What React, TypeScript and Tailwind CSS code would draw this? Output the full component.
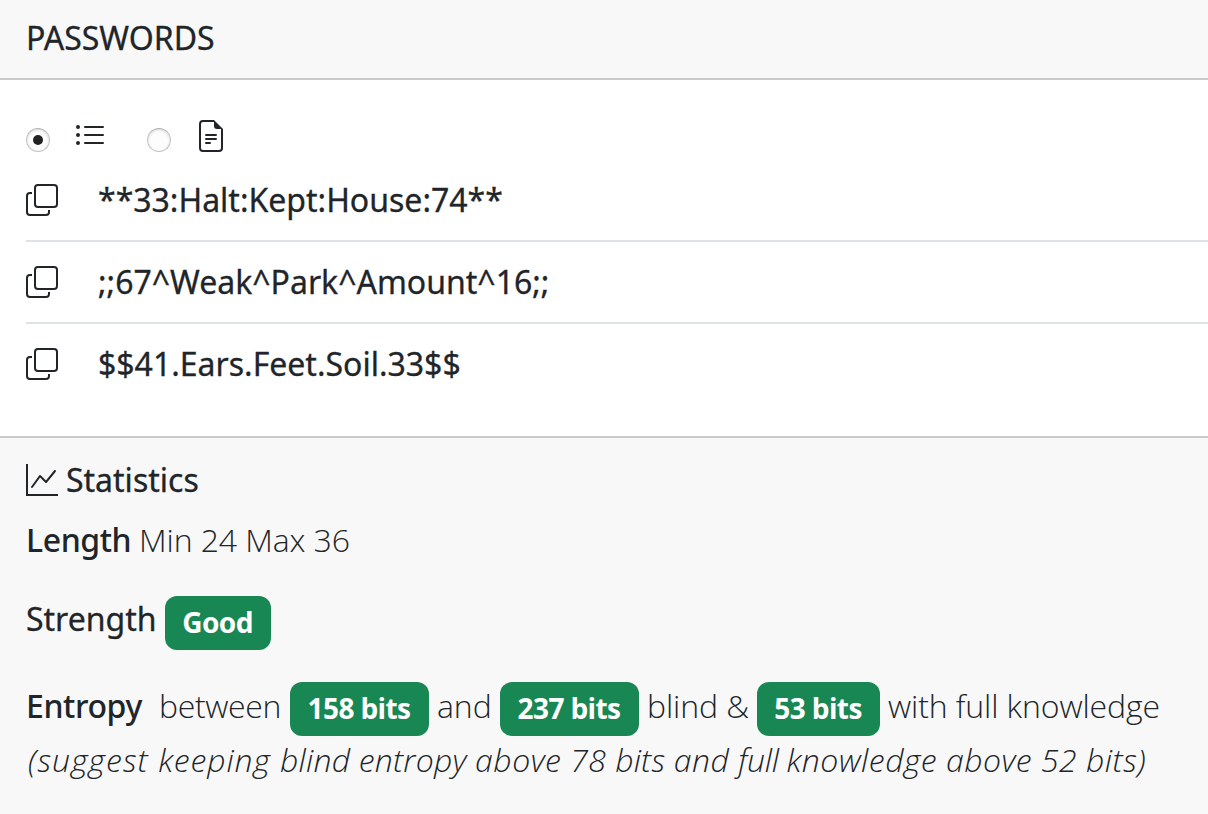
import { BsListUl, BsFileEarmarkText, BsCopy, BsGraphUp } from 'react-icons/bs';
import type { ReactNode } from 'react';

const passwords = ['**33:Halt:Kept:House:74**', ';;67^Weak^Park^Amount^16;;', '$$41.Ears.Feet.Soil.33$$'];

function Badge({ children, width }: { children: ReactNode; width: string }) {
  return (
    <span className={`${width} flex h-[54px] shrink-0 items-center justify-center rounded-xl bg-[#198754] pr-px pb-0.5 text-[28px] font-bold tracking-[-0.6px] text-white`}>
      {children}
    </span>
  );
}

function Radio({ checked = false }: { checked?: boolean }) {
  return (
    <span className="mt-2 flex size-6 shrink-0 items-center justify-center rounded-full border border-[#c4c4c4] border-t-[#b0b0b0] bg-[#fdfdfd] shadow-[inset_0_1px_3px_rgba(0,0,0,0.16)]">
      {checked && <span className="size-[10px] rounded-full bg-[#222]" />}
    </span>
  );
}

export default function App() {
  return (
    <div className="h-[814px] w-[1208px] overflow-hidden bg-white font-['Noto_Sans',sans-serif] text-[32px] leading-[48px] whitespace-nowrap text-[#212529]">
      <header className="h-20 border-b-2 border-[#cacaca] bg-[#f8f8f8] px-[26px] pt-[14px] [-webkit-text-stroke:0.3px]">PASSWORDS</header>
      <main className="h-[356px] pl-[26px] pt-[35px]">
        <div className="flex h-[42px] items-center">
          <Radio checked />
          <BsListUl className="ml-6 size-8" />
          <span className="w-[41px]" />
          <Radio />
          <BsFileEarmarkText className="ml-[23.5px] size-8" />
        </div>
        <ul className="pt-[3px]">
          {passwords.map((p) => (
            <li key={p} className="flex h-[82px] items-center border-b-2 border-[#dee2e6] last:border-transparent">
              <BsCopy className="mr-10 size-8" />
              <span className="[-webkit-text-stroke:0.3px]">{p}</span>
            </li>
          ))}
        </ul>
      </main>
      <section className="h-[378px] border-t-2 border-[#cacaca] bg-[#f8f8f8] pl-[26px] pt-[18px]">
        <h2 className="flex items-center gap-2 [-webkit-text-stroke:0.3px]"><BsGraphUp className="size-8" />Statistics</h2>
        <p className="mt-3 flex font-['Open_Sans'] font-light tracking-[-0.1px]">
          <span className="w-[113px] font-['Noto_Sans'] font-medium tracking-[-0.4px]">Length</span>Min 24 Max 36
        </p>
        <div className="mt-8 flex h-[54px] items-start">
          <span className="-mt-px w-[139px] [-webkit-text-stroke:0.3px]">Strength</span><Badge width="w-[106px]">Good</Badge>
        </div>
        <div className="mt-8 flex h-[54px] items-start font-['Open_Sans'] font-light tracking-[-0.1px]">
          <span className="w-[133px] font-['Noto_Sans'] font-medium tracking-[-0.4px]">Entropy</span>
          <span className="w-[131px] tracking-[-0.35px]">between</span><Badge width="w-[139px]">158 bits</Badge>
          <span className="w-[71px] pl-2">and</span><Badge width="w-[139px]">237 bits</Badge>
          <span className="w-[118px] pl-2">blind &amp;</span><Badge width="w-[123px]">53 bits</Badge>
          <span className="pl-2">with full knowledge</span>
        </div>
        <p className="pl-0.5 font-['Open_Sans'] font-light tracking-[0.5px] italic">
          <span className="tracking-[1.05px]">(suggest </span>
          <span className="tracking-[0.9px]">keeping </span>
          <span className="tracking-[0.22px]">blind entropy </span>
          above 78 <span className="tracking-[0.2px]">bits </span>and <span className="tracking-[-0.3px]">full </span>
          knowledge above 52 bits)
        </p>
      </section>
    </div>
  );
}
